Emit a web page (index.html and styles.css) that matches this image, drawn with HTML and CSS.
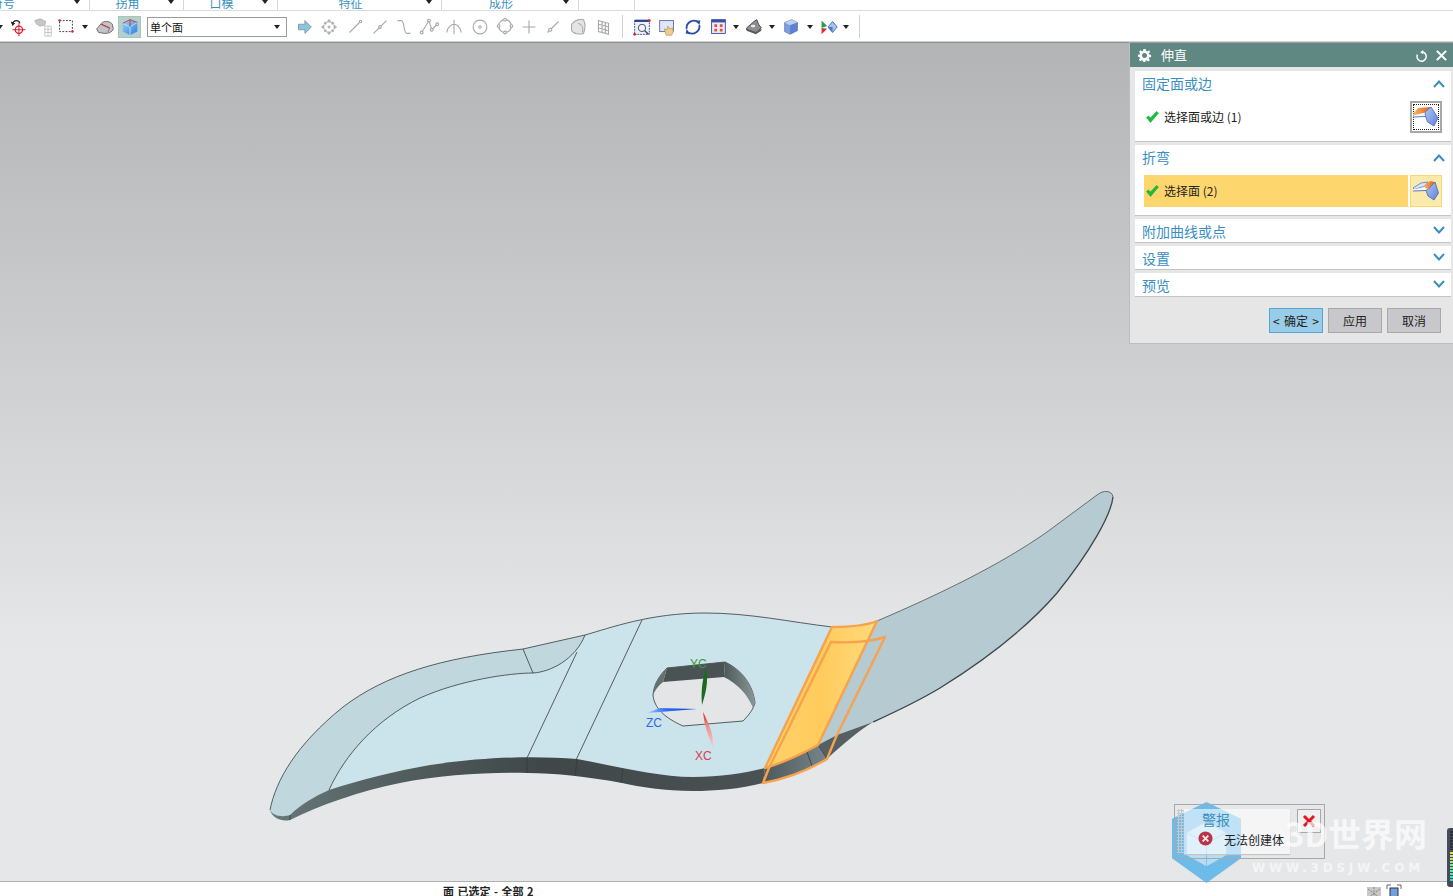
FILE: index.html
```html
<!DOCTYPE html>
<html lang="zh-CN">
<head>
<meta charset="utf-8">
<title>伸直</title>
<link rel="stylesheet" href="styles.css">
</head>
<body>
<svg class="defs" width="0" height="0" aria-hidden="true">
  <defs>
    <linearGradient id="bendBlue" x1="0" y1="0" x2="1" y2="1"><stop offset="0" stop-color="#b4c8f4"/><stop offset="1" stop-color="#5f80d8"/></linearGradient>
    <linearGradient id="bendOrange" x1="0" y1="0" x2="1" y2="0"><stop offset="0" stop-color="#f8b45c"/><stop offset="1" stop-color="#e8601c"/></linearGradient>
    <linearGradient id="cubeBlue" x1="0" y1="0" x2="1" y2="1"><stop offset="0" stop-color="#9fd4f5"/><stop offset="1" stop-color="#2a7fe0"/></linearGradient>
    <linearGradient id="faceYellow" x1="0" y1="0" x2="1" y2="0"><stop offset="0" stop-color="#ffd26a"/><stop offset=".5" stop-color="#ffcb5c"/><stop offset="1" stop-color="#ffda7c"/></linearGradient>
    <linearGradient id="wallDark" x1="270" y1="0" x2="770" y2="0" gradientUnits="userSpaceOnUse"><stop offset="0" stop-color="#67797a"/><stop offset=".2" stop-color="#566263"/><stop offset=".55" stop-color="#3f4748"/><stop offset="1" stop-color="#4a5253"/></linearGradient>
    <linearGradient id="wallLight" x1="765" y1="0" x2="827" y2="0" gradientUnits="userSpaceOnUse"><stop offset="0" stop-color="#4f5a5c"/><stop offset="1" stop-color="#77858a"/></linearGradient>
    <linearGradient id="holeWall" x1="725" y1="0" x2="755" y2="0" gradientUnits="userSpaceOnUse"><stop offset="0" stop-color="#4f5a5b"/><stop offset="1" stop-color="#8a9697"/></linearGradient>
    <linearGradient id="axisBlue" x1="697" y1="0" x2="645" y2="0" gradientUnits="userSpaceOnUse"><stop offset="0" stop-color="#0a3fd8"/><stop offset=".6" stop-color="#2a70f0"/><stop offset="1" stop-color="#b8d4f8"/></linearGradient>
    <linearGradient id="axisRed" x1="0" y1="712" x2="0" y2="748" gradientUnits="userSpaceOnUse"><stop offset="0" stop-color="#d02020"/><stop offset=".4" stop-color="#f09090"/><stop offset="1" stop-color="#f8d0d4"/></linearGradient>
    <symbol id="bend" viewBox="0 0 26 20">
      <path d="M0 7 L5 1 L18 0 L12.500 5.500 L1.500 8.500Z" fill="url(#bendOrange)"/>
      <path d="M0 8.500 L12.500 5.500 L13 9.500 L0 10Z" fill="#f4f8ff"/>
      <path d="M0 10 L13 9.500" fill="none" stroke="#5a78c8" stroke-width="1"/>
      <path d="M12 5 L18 0 L25 11 L21 19 L14.500 15 L12.500 9Z" fill="url(#bendBlue)" stroke="#4a68b8" stroke-width=".8"/>
    </symbol>
    <symbol id="bendActive" viewBox="0 0 26 20">
      <path d="M0 7 L8 2 L15 1 L12 5 L1.500 8.500Z" fill="#d6e4fa" stroke="#5a78c8" stroke-width=".8"/>
      <path d="M10 6 L17 0 L22 1 L16 8Z" fill="url(#bendOrange)"/>
      <path d="M0 8.500 L12 6 L13 9.500 L0 10Z" fill="#f4f8ff"/>
      <path d="M0 10 L13 9.500" fill="none" stroke="#5a78c8" stroke-width="1"/>
      <path d="M15.500 8 L22 1 L25.500 12 L21 19 L15 15 L13 9.500Z" fill="url(#bendBlue)" stroke="#4a68b8" stroke-width=".8"/>
    </symbol>
    <symbol id="tick" viewBox="0 0 13 12">
      <path d="M.5 6.500 L4.500 11.500 L12.500 2 L10.500 .5 L4.500 7 L2.500 5Z" fill="#16c03a" stroke="#0e9a2c" stroke-width=".5"/>
    </symbol>
  </defs>
</svg>

<div class="app">
  <div class="ribbon">
    <div class="group g1"><span class="glabel gl1">符号</span><i class="caret"></i></div>
    <div class="group g2"><span class="glabel">拐角</span><i class="caret"></i></div>
    <div class="group g2"><span class="glabel">口模</span><i class="caret"></i></div>
    <div class="group g3"><span class="glabel">特征</span><i class="caret"></i></div>
    <div class="group g4"><span class="glabel">成形</span><i class="caret"></i></div>
    <div class="group g5"></div>
  </div>

  <div class="toolbar">
    <span class="slot w6"><i class="caret caret-clip"></i></span>
    <span class="slot w24"><svg class="ic" viewBox="0 0 24 24"><path d="M6 9 C7 4 13 4 14 8" fill="none" stroke="#222" stroke-width="1.4"/><path d="M4 6 L6 11 L9 8Z" fill="#222"/><circle cx="13" cy="15" r="4" fill="none" stroke="#d8202a" stroke-width="1.4"/><path d="M13 8 V22 M6 15 H20" stroke="#d8202a" stroke-width="1.1"/></svg></span>
    <span class="slot w26"><svg class="ic" viewBox="0 0 24 24"><path d="M3 5 L9 3 L15 6 L14 10 L9 11 L5 9Z" fill="#c6c6c6" stroke="#aaa" stroke-width=".8"/><path d="M14 11 H21 V22 H14Z M14 14.5 H21 M14 18 H21 M17.5 11 V22" fill="none" stroke="#c4c4c4"/></svg></span>
    <span class="slot w20"><svg class="ic" viewBox="0 0 24 24"><rect x="5" y="5" width="14" height="12" fill="none" stroke="#333" stroke-dasharray="2 1.5"/><circle cx="5" cy="5" r="1.4" fill="#d8202a"/><circle cx="19" cy="17" r="1.4" fill="#d8202a"/></svg></span>
    <span class="slot w18"><i class="caret"></i></span>
    <span class="slot w22"><svg class="ic" viewBox="0 0 24 24"><path d="M3 14 L9 7 C13 5 18 6 20 9 L21 14 C20 18 15 19 12 19 L5 18Z" fill="#c4c4c8" stroke="#666"/><path d="M8 9 L17 13 L15 18" fill="none" stroke="#777"/><path d="M8 9 L17 13" stroke="#d8303a" stroke-width="1.2"/></svg></span>
    <span class="slot-active"><svg class="ic" viewBox="0 0 24 24"><path d="M4 8 L12 4 L20 7 L20 17 L12 21 L4 17Z" fill="url(#cubeBlue)"/><path d="M4 8 L12 12 L20 7 M12 12 V21" fill="none" stroke="#e0f0fb" stroke-width=".8"/><path d="M4 8 L12 4 L20 7" fill="none" stroke="#d8303a"/><path d="M12 4 V12" stroke="#d8303a"/></svg></span>
    <div class="combo"><span class="combo-text">单个面</span><i class="caret"></i></div>
    <span class="slot w25"><svg class="ic" viewBox="0 0 24 24"><path d="M6 9 H13 V5 L20 12 L13 19 V15 H6Z" fill="#8cc4d8" stroke="#7a9aa8"/></svg></span>
    <span class="slot w26"><svg class="ic gray" viewBox="0 0 24 24"><path d="M12 3 L15 7 H9Z M12 21 L15 17 H9Z M3 12 L7 9 V15Z M21 12 L17 9 V15Z"/><circle cx="8" cy="8" r="1.6"/><circle cx="16" cy="8" r="1.6"/><circle cx="8" cy="16" r="1.6"/><circle cx="16" cy="16" r="1.6"/><circle cx="12" cy="12" r="1.6"/></svg></span>
    <span class="slot w25"><svg class="ic gray line" viewBox="0 0 24 24"><path d="M6 18 L18 6"/><circle cx="18" cy="6" r="1.3"/></svg></span>
    <span class="slot w25"><svg class="ic gray line" viewBox="0 0 24 24"><path d="M5 19 L19 5"/><circle cx="12" cy="12" r="1.5"/></svg></span>
    <span class="slot w24"><svg class="ic gray line" viewBox="0 0 24 24"><path d="M5 5 H9 C13 5 11 18 15 19 H19"/></svg></span>
    <span class="slot w25"><svg class="ic gray line" viewBox="0 0 24 24"><path d="M4 18 L12 5 L15 15 L21 9"/><circle cx="4" cy="18" r="1.5"/><circle cx="12" cy="5" r="1.5"/><circle cx="15" cy="15" r="1.5"/><circle cx="21" cy="9" r="1.5"/></svg></span>
    <span class="slot w26"><svg class="ic gray line" viewBox="0 0 24 24"><path d="M12 4 V20 M4 18 C5 12 9 9 12 9 C15 9 19 12 20 18"/></svg></span>
    <span class="slot w25"><svg class="ic gray line" viewBox="0 0 24 24"><circle cx="12" cy="12" r="7.5"/><circle cx="12" cy="12" r="1.3"/></svg></span>
    <span class="slot w25"><svg class="ic gray line" viewBox="0 0 24 24"><circle cx="12" cy="11" r="7"/><circle cx="12" cy="4" r="1.5"/><circle cx="12" cy="18" r="1.5"/><circle cx="5" cy="11" r="1.5"/><circle cx="19" cy="11" r="1.5"/></svg></span>
    <span class="slot w24"><svg class="ic gray line" viewBox="0 0 24 24"><path d="M12 5 V19 M5 12 H19"/></svg></span>
    <span class="slot w24"><svg class="ic gray line" viewBox="0 0 24 24"><path d="M6 18 L18 6"/><circle cx="9" cy="15" r="1.7"/></svg></span>
    <span class="slot w26"><svg class="ic gray line" viewBox="0 0 24 24"><path class="soft" d="M5 9 C9 4 15 3 18 4 C20 8 20 14 18 19 C14 20 8 20 5 16Z"/><path d="M12 8 C16 9 18 13 17 18"/></svg></span>
    <span class="slot w24"><svg class="ic gray line" viewBox="0 0 24 24"><path d="M7 5 L18 8 V20 L7 17Z M7 9 L18 12 M7 13 L18 16 M11 6 V18 M14.500 7 V19"/></svg></span>
    <span class="tool-sep sep1"></span>
    <span class="slot w24"><svg class="ic" viewBox="0 0 24 24"><rect x="4" y="5" width="16" height="15" fill="#eef3fb" stroke="#2a3f9a" stroke-dasharray="2 1"/><rect x="4" y="4" width="16" height="2.500" fill="#2a3f9a"/><circle cx="12" cy="13" r="4" fill="none" stroke="#445"/><path d="M15 16 L19 20" stroke="#445" stroke-width="1.500"/><circle cx="20" cy="5" r="1.500" fill="#d8202a"/><circle cx="4" cy="20" r="1.500" fill="#d8202a"/></svg></span>
    <span class="slot w26"><svg class="ic" viewBox="0 0 24 24"><rect x="4" y="5" width="15" height="12" fill="#dfe6f5" stroke="#5a6ea8"/><path d="M11 21 L9 14 L12 15 L13 11 L15 14 L18 13 L19 17 L17 21Z" fill="#f0cb8c" stroke="#a8824a" stroke-width=".6"/></svg></span>
    <span class="slot w25"><svg class="ic" viewBox="0 0 24 24"><path d="M5 14 A8 8 0 0 1 18 7" fill="none" stroke="#2a4fa8" stroke-width="2"/><path d="M19 10 A8 8 0 0 1 7 18" fill="none" stroke="#2a4fa8" stroke-width="2"/><path d="M15 5 L20 5 L19 10Z M9 20 L4 19 L5 14Z" fill="#2a4fa8"/></svg></span>
    <span class="slot w25"><svg class="ic" viewBox="0 0 24 24"><rect x="5" y="4" width="15" height="15" fill="#e8ecf8" stroke="#3a4fa8"/><rect x="5" y="4" width="15" height="3" fill="#3a4fa8"/><path d="M8 9 H11 V12 H8Z M14 9 H17 V12 H14Z M8 14 H11 V17 H8Z M14 14 H17 V17 H14Z" fill="#e8503a"/></svg></span>
    <span class="slot w12"><i class="caret"></i></span>
    <span class="slot w24"><svg class="ic" viewBox="0 0 24 24"><path d="M4 13 L12 6 L15 4 L17 9 L20 13 L14 18 L4 15Z" fill="#8a8e92" stroke="#444"/><path d="M4 14 L14 18 L20 14 L20 16 L14 20 L4 16Z" fill="#55585c"/><ellipse cx="11" cy="11" rx="2.500" ry="1.500" fill="#e8e8e8"/></svg></span>
    <span class="slot w12"><i class="caret"></i></span>
    <span class="slot w26"><svg class="ic" viewBox="0 0 24 24"><path d="M5 7 L13 4 L19 7 V16 L11 20 L5 17Z" fill="#7e9ee0" stroke="#5a70b0" stroke-width=".7"/><path d="M5 7 L11 10 L19 7 L13 4Z" fill="#bcd0f4"/><path d="M11 10 V20 L19 16 V7Z" fill="#5f80cc"/></svg></span>
    <span class="slot w12"><i class="caret"></i></span>
    <span class="slot w24"><svg class="ic" viewBox="0 0 24 24"><path d="M5 5 L11 11 L5 13Z" fill="#2a9a4a"/><path d="M5 13 L11 14 L5 20Z" fill="#d8303a"/><path d="M12 12 L17 6 L22 12 L17 18Z" fill="#a8c4ec" stroke="#4a68b0"/><path d="M12 12 L17 12 L17 18Z" fill="#4a78c8"/></svg></span>
    <span class="slot w12"><i class="caret"></i></span>
    <span class="tool-sep sep2"></span>
  </div>

  <main class="viewport">
    <svg class="model" viewBox="0 43 1453 838" aria-hidden="true">
      <!-- right blade -->
      <path d="M877 621 C940 594 1000 565 1047 532 L1097 495 C1103 490 1112 490 1113 497 C1111 515 1090 552 1057 593 C1025 630 985 660 940 688 C915 703 895 712 873 722 L837 735 L818 745Z" fill="#b5cad1"/>
      <path d="M877 621 C940 594 1000 565 1047 532 L1097 495 C1103 490 1112 490 1113 497" fill="none" stroke="#4a5456" stroke-width=".8"/>
      <path d="M1113 497 C1111 515 1090 552 1057 593 C1025 630 985 660 940 688 C915 703 895 712 873 722" fill="none" stroke="#3c4649" stroke-width="1.300"/>
      <!-- left blade -->
      <path d="M270 810 C276 780 296 745 343 707 C385 675 440 658 523 649 L585 635 C575 660 550 672 533 673 C510 673 460 680 420 698 C375 720 345 755 329 790 C315 796 300 805 290 815 C284 817 274 817 270 810Z" fill="#c1d7de"/>
      <!-- top face -->
      <path d="M329 790 C345 755 375 720 420 698 C460 680 510 673 533 673 C550 672 575 660 585 635 C610 628 650 613 705 613 C750 613 790 622 832 627 L765 768 C745 773 720 777 693 777 C660 777 625 768 577 759 C540 756 490 756 430 765 C395 771 360 780 329 790Z" fill="#cbe3eb"/>
      <!-- side wall -->
      <path d="M329 790 C360 780 395 771 430 765 C490 756 540 756 577 759 C625 768 660 777 693 777 C720 777 745 773 765 768 L763 783 C740 789 715 791 693 791 C665 791 640 787 622 783 C590 777 555 773 527 773 C490 772 440 775 400 783 C360 791 320 805 290 820 C282 822 272 818 270 810 C274 817 284 817 290 815 C300 805 315 796 329 790Z" fill="url(#wallDark)"/>
      <!-- wall and wedge beside the highlighted face -->
      <path d="M818 745 L837 735 L873 722 C860 730 845 742 827 759Z" fill="#566062"/>
      <path d="M765 768 C785 762 800 755 818 745 L827 759 C805 772 785 779 763 783Z" fill="url(#wallLight)"/>
      <!-- edges -->
      <g class="edges">
        <path d="M270 810 C276 780 296 745 343 707 C385 675 440 658 523 649 L585 635 C610 628 650 613 705 613 C750 613 790 622 832 627"/>
        <path d="M329 790 C345 755 375 720 420 698 C460 680 510 673 533 673 C550 672 575 660 585 635"/>
        <path d="M523 649 L533 673 M642 620 L576 760 M577 652 L527 758 M527 758 V773 M577 760 L575 776 M623 769 L621 783 M290 815 V820 M807 752 L812 766 M818 745 L827 759"/>
      </g>
      <!-- highlighted face -->
      <path d="M832 627 C848 627 865 626 877 621 L818 745 C800 755 785 762 765 768Z" fill="url(#faceYellow)"/>
      <g class="orange">
        <path d="M832 627 C848 627 865 626 877 621 L818 745 C800 755 785 762 765 768Z"/>
        <path d="M831 642 C850 643 870 642 885 637 L836 737 L827 759 C805 772 785 779 763 783 L769 768 L831 642Z"/>
      </g>
      <!-- hole -->
      <path d="M667 668 L725 662 C742 670 753 685 755 703 C753 710 748 716 743 721 L683 726 C665 718 654 708 653 695 C654 683 660 675 667 668Z" fill="#e4e5e7" stroke="#333a3b" stroke-width=".8"/>
      <path d="M667 668 L725 662 L724 677 L663 682Z" fill="#4a5354"/>
      <path d="M725 662 C742 670 753 685 755 703 L753 708 C748 695 738 684 724 677Z" fill="url(#holeWall)"/>
      <path d="M667 668 L663 682 C658 686 655 690 653 695 C654 683 660 675 667 668Z" fill="#66716f"/>
      <!-- work coordinate triad -->
      <path d="M706 669 C709 682 705 695 702 705 C701 692 702 680 706 669Z" fill="#1b6a1f"/>
      <path d="M697 709 L647 713 L660 708 Z" fill="url(#axisBlue)"/>
      <path d="M703 712 C708 722 714 734 713 748 C708 736 704 724 703 712Z" fill="url(#axisRed)"/>
      <text class="axis ax-y" x="690" y="668">YC</text>
      <text class="axis ax-z" x="646" y="727">ZC</text>
      <text class="axis ax-x" x="695" y="760">XC</text>
    </svg>

    <section class="dialog">
      <header class="dlg-head">
        <svg class="dlg-gear" viewBox="0 0 16 16"><path d="M6.800 1 H9.200 L9.600 3 L11 3.600 L12.800 2.500 L14 4.200 L12.600 5.700 L13 7 L15 7.500 V9.500 L13 10 L12.500 11.300 L13.700 13 L12 14.400 L10.500 13 L9.200 13.500 L8.800 15 H6.800 L6.400 13.500 L5 13 L3.400 14.200 L2 12.500 L3.200 11 L2.700 9.700 L1 9.300 V7.300 L2.800 6.800 L3.300 5.500 L2.200 3.900 L3.800 2.500 L5.300 3.500 L6.500 3Z M8 5.400 A2.700 2.700 0 1 0 8.010 5.400Z" fill="#fff" fill-rule="evenodd"/></svg>
        <h1 class="dlg-title">伸直</h1>
        <svg class="dlg-reset" viewBox="0 0 14 14"><path d="M8.500 2.200 A5 5 0 1 1 2.500 5" fill="none" stroke="#fff" stroke-width="1.600"/><path d="M8.800 0 V4.600 L5.500 2.300Z" fill="#fff"/></svg>
        <svg class="dlg-close" viewBox="0 0 14 14"><path d="M2 2 L12 12 M12 2 L2 12" stroke="#fff" stroke-width="2.200"/></svg>
      </header>

      <div class="panel">
        <div class="panel-head"><span class="panel-title">固定面或边</span><svg class="chev" viewBox="0 0 12 8"><path d="M1 7 L6 1.500 L11 7" fill="none" stroke="#3a8fc0" stroke-width="2"/></svg></div>
        <div class="sel-row">
          <div class="sel-label"><svg class="tick"><use href="#tick"/></svg><span class="sel-text">选择面或边 (1)</span></div>
          <button class="sel-btn is-focus"><span class="dots"><svg class="bend"><use href="#bend"/></svg></span></button>
        </div>
      </div>

      <div class="panel">
        <div class="panel-head"><span class="panel-title">折弯</span><svg class="chev" viewBox="0 0 12 8"><path d="M1 7 L6 1.500 L11 7" fill="none" stroke="#3a8fc0" stroke-width="2"/></svg></div>
        <div class="sel-row">
          <div class="sel-label is-active"><svg class="tick"><use href="#tick"/></svg><span class="sel-text">选择面 (2)</span></div>
          <button class="sel-btn is-active"><svg class="bend"><use href="#bendActive"/></svg></button>
        </div>
      </div>

      <div class="panel panel-closed"><span class="panel-title">附加曲线或点</span><svg class="chev" viewBox="0 0 12 8"><path d="M1 1 L6 6.500 L11 1" fill="none" stroke="#3a8fc0" stroke-width="2"/></svg></div>
      <div class="panel panel-closed"><span class="panel-title">设置</span><svg class="chev" viewBox="0 0 12 8"><path d="M1 1 L6 6.500 L11 1" fill="none" stroke="#3a8fc0" stroke-width="2"/></svg></div>
      <div class="panel panel-closed"><span class="panel-title">预览</span><svg class="chev" viewBox="0 0 12 8"><path d="M1 1 L6 6.500 L11 1" fill="none" stroke="#3a8fc0" stroke-width="2"/></svg></div>

      <footer class="dlg-foot">
        <button class="btn btn-ok"><span>&lt;</span><span>确定</span><span>&gt;</span></button>
        <button class="btn">应用</button>
        <button class="btn">取消</button>
      </footer>
    </section>

    <aside class="alert">
      <div class="grip"></div>
      <div class="alert-card">
        <div class="alert-title">警报</div>
        <div class="alert-msg">
          <svg class="err" viewBox="0 0 16 16"><circle cx="8" cy="8" r="7.500" fill="#b8364a"/><path d="M5 5 L11 11 M11 5 L5 11" stroke="#f4e6e8" stroke-width="2"/></svg>
          <span>无法创建体</span>
        </div>
      </div>
      <button class="alert-close"><svg viewBox="0 0 14 14"><path d="M2 2 L12 12 M12 2 L2 12" stroke="#e01820" stroke-width="3"/></svg></button>
    </aside>
  </main>

  <footer class="status">
    <span class="status-text">面 已选定 - 全部 2</span>
    <span class="status-icons">
      <svg class="st-ic" viewBox="0 0 16 16"><rect x="1" y="3" width="14" height="12" fill="#c8c8c8"/><path d="M2 5 L14 14 M14 5 L2 14 M8 3 V15" stroke="#888" stroke-dasharray="2 1"/></svg>
      <svg class="st-ic" viewBox="0 0 16 16"><path d="M1 5 V1 H5 M11 1 H15 V5" fill="none" stroke="#666"/><rect x="4" y="4" width="8" height="12" fill="#6fa0dc" stroke="#333"/></svg>
    </span>
  </footer>

  <div class="side-widget"></div>

  <div class="watermark" aria-hidden="true">
    <svg class="wm-logo" viewBox="0 0 72 82">
      <path d="M36 0 L71 17 V57 L36 82 L1 57 V17Z" fill="#4fb0e8" opacity=".8"/>
      <path d="M36 20 L56 31 V54 L36 65 L16 54 V31Z" fill="#fff" opacity=".5"/>
      <path d="M16 31 L36 42 L56 31 M36 42 V65" fill="none" stroke="#4fb0e8" stroke-width="1" opacity=".6"/>
    </svg>
    <div class="wm-name">3D世界网</div>
    <div class="wm-url">WWW.3DSJW.COM</div>
  </div>
</div>
</body>
</html>
```

FILE: styles.css
```css
* { box-sizing: border-box; }
html, body { margin: 0; padding: 0; height: 100%; overflow: hidden; background: #fff; }
body { font-family: "Noto Sans CJK SC", "Liberation Sans", sans-serif; font-size: 12px; color: #222; }
.defs { position: absolute; }
.app { position: relative; display: flex; flex-direction: column; width: 1453px; height: 896px; overflow: hidden; }

/* ribbon remainder */
.ribbon { display: flex; flex: none; height: 11px; overflow: hidden; background: #fff; border-bottom: 1px solid #dcdcdc; }
.group { position: relative; display: flex; align-items: flex-end; justify-content: center; height: 10px; padding-right: 18px; border-right: 1px solid #d8d8d8; }
.g1 { width: 90px; justify-content: flex-start; padding-right: 0; }
.g2 { width: 94px; }
.g3 { width: 164px; }
.g4 { width: 137px; }
.g5 { width: 56px; }
.glabel { flex: none; font-size: 12px; line-height: 15px; color: #3a8fc0; }
.gl1 { margin-left: -9px; }
.group .caret { position: absolute; right: 9px; top: 0; }
.caret { display: block; width: 0; height: 0; border-left: 3.5px solid transparent; border-right: 3.5px solid transparent; border-top: 4px solid #222; }

/* toolbar */
.toolbar { display: flex; align-items: center; flex: none; height: 32px; background: #fff; border-bottom: 1px solid #8f9091; box-shadow: inset 0 -1px 0 #d0d0d0; }
.slot { display: flex; align-items: center; justify-content: center; flex: none; height: 24px; }
.w6 { width: 6px; } .w12 { width: 12px; } .w18 { width: 18px; } .w20 { width: 20px; } .w22 { width: 22px; }
.w24 { width: 24px; } .w25 { width: 25px; } .w26 { width: 26px; }
.caret-clip { margin-left: -6px; }
.ic { display: block; flex: none; width: 22px; height: 22px; }
.gray { fill: #b4b4b4; }
.gray.line { fill: none; stroke: #a8a8a8; stroke-width: 1.2; }
.gray.line circle { fill: #fff; }
.gray.line .soft { fill: #e4e4e4; }
.slot-active { display: flex; align-items: center; justify-content: center; flex: none; width: 23px; height: 22px; margin-left: 2px; background: #b4d0ca; border: 1px solid #a8c4be; }
.combo { display: flex; align-items: center; justify-content: space-between; flex: none; width: 140px; height: 20px; margin: 0 4px 0 6px; padding: 0 6px 0 2px; background: #fff; border: 1px solid #9a9a9a; }
.combo-text { font-size: 11px; line-height: 18px; color: #111; }
.tool-sep { flex: none; width: 1px; height: 23px; background: #d0d0d0; }
.sep1 { margin: 0 7px; }
.sep2 { margin-left: 7px; }

/* graphics window */
.viewport { position: relative; flex: 1; min-height: 0; background: linear-gradient(180deg, #b3b4b6 0, #e6e7e9 607px); }
.model { position: absolute; left: 0; top: 0; width: 1453px; height: 838px; }
.edges path { fill: none; stroke: #343b3c; stroke-width: .8; }
.orange path { fill: none; stroke: #f7a24c; stroke-width: 2.4; stroke-linejoin: round; }
.axis { font: 12px "Liberation Sans", sans-serif; }
.ax-y { fill: #3d9a3d; } .ax-z { fill: #2a6be8; } .ax-x { fill: #d9404a; }

/* dialog */
.dialog { position: absolute; right: 0; top: -1px; display: flex; flex-direction: column; gap: 4px; width: 324px; height: 302px; padding: 0 2px 0 5px; background: #e6e6e6; border-left: 1px solid #bdbdbd; border-top: 1px solid #a0a0a0; border-bottom: 1px solid #bdbdbd; }
.dlg-head { display: flex; align-items: center; flex: none; height: 24px; margin: 0 -2px 0 -5px; padding: 0 5px 0 7px; background: #5f8883; color: #fff; }
.dlg-gear { flex: none; width: 15px; height: 15px; }
.dlg-title { flex: 1; margin: 0 0 0 9px; font-size: 13px; font-weight: 400; line-height: 24px; }
.dlg-reset { flex: none; width: 13px; height: 13px; margin-right: 7px; margin-top: 2px; }
.dlg-close { flex: none; width: 13px; height: 13px; }
.panel { flex: none; height: 70px; background: #fff; box-shadow: 0 1px 0 #c4c4c4; }
.panel-head { display: flex; align-items: center; justify-content: space-between; height: 26px; padding: 0 6px 0 7px; }
.panel-title { font-size: 14px; line-height: 24px; color: #3a8fc0; }
.panel-head .panel-title { margin-bottom: 2px; }
.panel-head .chev { margin-bottom: 1px; }
.chev { flex: none; width: 12px; height: 8px; }
.panel-closed { display: flex; align-items: center; justify-content: space-between; height: 23px; padding: 0 6px 0 7px; }
.panel-closed .chev { margin-top: -2px; }
.sel-row { display: flex; gap: 2px; height: 32px; margin-top: 4px; padding: 0 9px; }
.sel-label { display: flex; align-items: center; flex: 1; gap: 5px; padding-left: 2px; font-size: 12px; color: #222; }
.sel-label.is-active { background: #fdd66e; }
.sel-text { margin-bottom: 2px; }
.tick { flex: none; width: 13px; height: 12px; }
.sel-btn { display: flex; align-items: center; justify-content: center; flex: none; width: 32px; height: 32px; padding: 0; background: #fff; border: 1px solid #a8a8a8; }
.sel-btn.is-focus { border-width: 2px; }
.sel-btn.is-active { background: #faeaac; border-color: #fdd66e; }
.dots { display: flex; align-items: center; justify-content: center; width: 26px; height: 26px; border: 1px dotted #222; }
.bend { display: block; flex: none; width: 26px; height: 20px; }
.dlg-foot { display: flex; justify-content: flex-end; gap: 5px; margin-top: 8px; padding-right: 10px; }
.btn { width: 54px; height: 25px; padding: 0; font: 12px "Noto Sans CJK SC", sans-serif; color: #222; background: #c8c8cc; border: 1px solid #a8a8a8; }
.btn-ok { display: flex; align-items: center; justify-content: space-between; padding: 0 3px; background: #99cce8; border-color: #52a7d8; }

/* alert */
.alert { position: absolute; z-index: 2; left: 1174px; top: 761px; display: flex; width: 151px; height: 55px; padding: 4px 4px 0 2px; background: transparent; border: 1px solid #a8a8a8; }
.grip { flex: none; width: 7px; height: 44px; background-image: radial-gradient(circle, #c4c8cc 1px, transparent 1.2px); background-size: 3px 3px; }
.alert-card { flex: none; width: 106px; height: 45px; background: rgba(255, 255, 255, .58); box-shadow: 0 1px 1px #c4c4c4; }
.alert-title { padding-left: 18px; font-size: 14px; line-height: 20px; color: #3a8fc0; }
.alert-msg { display: flex; align-items: center; gap: 11px; height: 20px; padding: 2px 0 0 14px; font-size: 12px; line-height: 18px; color: #222; }
.err { flex: none; width: 15px; height: 15px; margin-top: -3px; }
.alert-close { display: flex; align-items: center; justify-content: center; flex: none; width: 24px; height: 24px; margin-left: 7px; padding: 0; background: #f0f0f0; border: 1px solid #a8a8a8; }
.alert-close svg { width: 14px; height: 14px; }

/* status bar */
.status { display: flex; align-items: flex-start; flex: none; height: 15px; overflow: hidden; padding-left: 443px; background: #fff; border-top: 1px solid #b0b0b0; }
.status-text { font-size: 11px; font-weight: 700; line-height: 18px; word-spacing: 1px; color: #222; white-space: pre; }
.status-icons { display: flex; gap: 4px; margin-left: auto; padding: 2px 51px 0 0; }
.st-ic { display: block; width: 16px; height: 16px; }
.side-widget { position: absolute; right: 0; top: 828px; width: 6px; height: 59px; background: #454b58; border-radius: 3px 0 0 3px; }
.side-widget::after { content: ""; position: absolute; right: 0; top: 3px; width: 3px; height: 50px; background: repeating-linear-gradient(180deg, transparent 0 2px, #454b58 2px 3px), linear-gradient(180deg, #2c303a 0 38%, #e8e060 42%, #70e0a0 78%, #40d0d0 100%); }

/* watermark */
.watermark { position: absolute; left: 1171px; top: 802px; width: 282px; height: 82px; pointer-events: none; }
.wm-logo { position: absolute; z-index: 1; left: 0; top: 0; width: 71px; height: 81px; }
.wm-name { position: absolute; z-index: 3; right: 26px; top: 7px; font-size: 33px; font-weight: 700; line-height: 48px; color: rgba(255, 255, 255, .7); white-space: nowrap; }
.wm-url { position: absolute; z-index: 3; left: 81px; top: 58px; font: 700 12px/16px "DejaVu Sans", sans-serif; letter-spacing: 3.800px; color: rgba(255, 255, 255, .6); white-space: nowrap; }
```
